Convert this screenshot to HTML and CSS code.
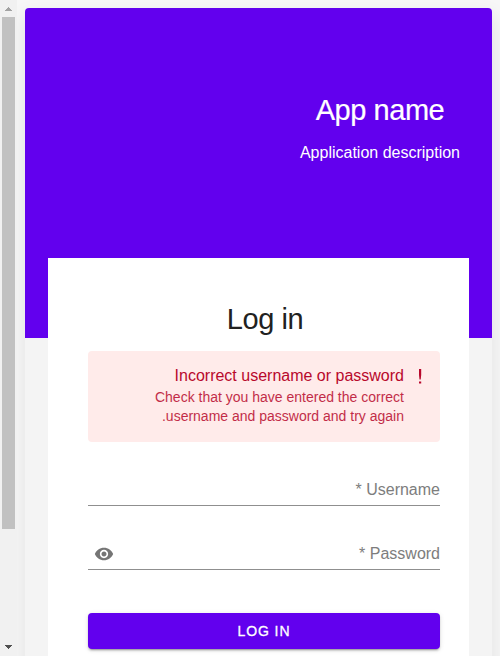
FILE: index.html
```html
<!DOCTYPE html>
<html lang="en" dir="rtl">
<head>
<meta charset="utf-8">
<title>Log in</title>
<link rel="stylesheet" href="styles.css">
</head>
<body>
<div class="window" dir="ltr">
  <div class="scrollbar">
    <svg class="arrow" width="17" height="17" viewBox="0 0 17 17" shape-rendering="crispEdges"><path fill="#a3a3a3" d="M8 7h1v1h1v1h1v1h1v1H5v-1h1V9h1V8h1z"/></svg>
    <div class="thumb"></div>
    <svg class="arrow" width="17" height="17" viewBox="0 0 17 17" shape-rendering="crispEdges"><path fill="#505050" d="M5 6h7v1h-1v1h-1v1H9v1H8V9H7V8H6V7H5z"/></svg>
  </div>
  <main class="page" dir="rtl">
    <div class="shell">
      <header class="hero">
        <div class="brand">
          <h1>App name</h1>
          <p>Application description</p>
        </div>
      </header>
      <form class="card">
        <h2>Log in</h2>
        <div class="alert">
          <svg width="20" height="20" viewBox="0 0 20 20"><path fill="#b8082c" d="M9 2h2.2v6l-.5 4.4H9.5L9 8zM9 14.4h2.2v2H9z"/></svg>
          <div class="message">
            <strong>Incorrect username or password</strong>
            <p>Check that you have entered the correct username and password and try again.</p>
          </div>
        </div>
        <div class="field"><label>Username *</label></div>
        <div class="field password">
          <label>Password *</label>
          <svg class="eye" width="20" height="20" viewBox="0 0 24 24"><path fill="#757575" d="M12 4.5C7 4.5 2.73 7.61 1 12c1.73 4.39 6 7.5 11 7.5s9.27-3.11 11-7.5c-1.73-4.39-6-7.5-11-7.5zM12 17c-2.76 0-5-2.24-5-5s2.24-5 5-5 5 2.24 5 5-2.24 5-5 5zm0-8c-1.66 0-3 1.34-3 3s1.34 3 3 3 3-1.34 3-3-1.34-3-3-3z"/></svg>
        </div>
        <button type="button">LOG IN</button>
      </form>
    </div>
  </main>
</div>
</body>
</html>
```
FILE: styles.css
```css
* { box-sizing: border-box; }
body { margin: 0; overflow: hidden; font-family: "Liberation Sans", Arial, sans-serif; }
h1, h2, p { margin: 0; font-weight: 400; }
.window { display: flex; height: 656px; overflow: hidden; background: #f7f7f7; }
.scrollbar { flex: 0 0 17px; display: flex; flex-direction: column; align-items: center; background: #f1f1f1; z-index: 1; }
.arrow { display: block; }
.thumb { width: 13px; height: 512px; margin-bottom: 110px; background: #c1c1c1; }
.page { flex: 1; padding: 8px; }
.shell {
  height: 760px;
  border-radius: 4px;
  background: #f4f4f4;
  box-shadow: 0 8px 18px 3px rgba(0,0,0,.07);
}
.hero { height: 330px; padding: 84px 32px 0; border-radius: 4px 4px 0 0; background: #6200ee; color: #fff; }
.brand { width: 160px; text-align: center; white-space: nowrap; }
h1 { font-size: 29px; line-height: 36px; letter-spacing: -.45px; -webkit-text-stroke: .2px #fff; }
.brand p { margin-top: 15px; font-size: 16px; line-height: 20px; }
.card { width: 421px; height: 510px; margin: -80px 23px 0 0; padding: 43px 29px 0 40px; background: #fff; }
h2 { width: 350px; font-size: 29px; line-height: 36px; letter-spacing: -.4px; text-align: center; color: #212121; }
.alert { display: flex; height: 91px; margin-top: 14px; padding: 15px 10px 0; border-radius: 4px; background: #ffebea; color: #b8082c; }
.alert svg { flex: none; margin-top: 1px; }
.message { margin-right: 6px; width: 258px; }
.message strong { display: block; font-weight: 400; font-size: 16px; line-height: 20px; }
.message p { margin-top: 2px; font-size: 14px; line-height: 19px; opacity: .85; }
.field { display: flex; justify-content: space-between; height: 36px; margin-top: 28px; padding-top: 10px; border-bottom: 1px solid #8f8f8f; font-size: 16px; line-height: 20px; color: #7d7d7d; }
.eye { margin: 0 0 0 6px; }
button { display: block; width: 100%; height: 36px; margin-top: 43px; padding: 0; border: 0; border-radius: 4px; background: #6200ee; color: #fff; font: 500 14px/36px "Liberation Sans", Arial, sans-serif; letter-spacing: .9px; -webkit-text-stroke: .3px #fff; box-shadow: 0 3px 1px -2px rgba(0,0,0,.2), 0 2px 2px rgba(0,0,0,.14), 0 1px 5px rgba(0,0,0,.12); }
```
